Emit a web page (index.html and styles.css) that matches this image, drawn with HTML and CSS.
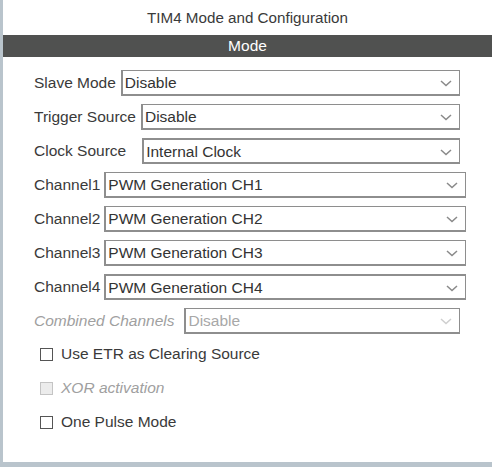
FILE: index.html
```html
<!DOCTYPE html>
<html>
<head>
<meta charset="utf-8">
<link rel="stylesheet" href="styles.css">
</head>
<body>
<div class="page">
  <div class="panel">
    <div class="title">TIM4 Mode and Configuration</div>
    <div class="bar">Mode</div>
    <div class="form">
      <div class="row r-short">
        <span class="label">Slave Mode</span>
        <div class="select"><span>Disable</span><svg class="chev" width="12" height="7" viewBox="0 0 12 7"><path d="M1 1 L6 5.5 L11 1" fill="none" stroke="#8a8a8a" stroke-width="1.5"/></svg></div>
      </div>
      <div class="row r-short">
        <span class="label">Trigger Source</span>
        <div class="select"><span>Disable</span><svg class="chev" width="12" height="7" viewBox="0 0 12 7"><path d="M1 1 L6 5.5 L11 1" fill="none" stroke="#8a8a8a" stroke-width="1.5"/></svg></div>
      </div>
      <div class="row r-short">
        <span class="label label-clock">Clock Source</span>
        <div class="select thick-top"><span>Internal Clock</span><svg class="chev" width="12" height="7" viewBox="0 0 12 7"><path d="M1 1 L6 5.5 L11 1" fill="none" stroke="#8a8a8a" stroke-width="1.5"/></svg></div>
      </div>
      <div class="row r-long">
        <span class="label">Channel1</span>
        <div class="select"><span>PWM Generation CH1</span><svg class="chev" width="12" height="7" viewBox="0 0 12 7"><path d="M1 1 L6 5.5 L11 1" fill="none" stroke="#8a8a8a" stroke-width="1.5"/></svg></div>
      </div>
      <div class="row r-long">
        <span class="label">Channel2</span>
        <div class="select"><span>PWM Generation CH2</span><svg class="chev" width="12" height="7" viewBox="0 0 12 7"><path d="M1 1 L6 5.5 L11 1" fill="none" stroke="#8a8a8a" stroke-width="1.5"/></svg></div>
      </div>
      <div class="row r-long">
        <span class="label">Channel3</span>
        <div class="select"><span>PWM Generation CH3</span><svg class="chev" width="12" height="7" viewBox="0 0 12 7"><path d="M1 1 L6 5.5 L11 1" fill="none" stroke="#8a8a8a" stroke-width="1.5"/></svg></div>
      </div>
      <div class="row r-long">
        <span class="label">Channel4</span>
        <div class="select thick-top"><span>PWM Generation CH4</span><svg class="chev" width="12" height="7" viewBox="0 0 12 7"><path d="M1 1 L6 5.5 L11 1" fill="none" stroke="#8a8a8a" stroke-width="1.5"/></svg></div>
      </div>
      <div class="row r-short disabled">
        <span class="label">Combined Channels</span>
        <div class="select"><span>Disable</span><svg class="chev" width="12" height="7" viewBox="0 0 12 7"><path d="M1 1 L6 5.5 L11 1" fill="none" stroke="#cfcfcf" stroke-width="1.5"/></svg></div>
      </div>
      <div class="checks">
        <div class="check"><span class="box"></span><span>Use ETR as Clearing Source</span></div>
        <div class="check disabled"><span class="box"></span><span class="ctext">XOR activation</span></div>
        <div class="check"><span class="box"></span><span>One Pulse Mode</span></div>
      </div>
    </div>
  </div>
  <div class="bottom"></div>
</div>
</body>
</html>
```
FILE: styles.css
```css
html, body {
  margin: 0;
  padding: 0;
  background: #ffffff;
}
body {
  font-family: "Liberation Sans", Arial, sans-serif;
  font-size: 15.5px;
  color: #333333;
}
.page {
  width: 492px;
  height: 467px;
  display: flex;
  flex-direction: column;
  overflow: hidden;
}
.panel {
  flex: 1;
  border-left: 3px solid #b9c4cc;
  display: flex;
  flex-direction: column;
}
.title {
  height: 35px;
  line-height: 36px;
  text-align: center;
  color: #3a3a3a;
  font-size: 15.2px;
}
.bar {
  height: 22px;
  line-height: 22px;
  background: #505150;
  color: #ffffff;
  text-align: center;
}
.form {
  padding: 13px 0 0 31px;
  display: flex;
  flex-direction: column;
  gap: 8px;
}
.row {
  display: flex;
  align-items: center;
  height: 26px;
}
.r-short { margin-right: 32px; }
.r-long { margin-right: 26px; }
.label {
  white-space: nowrap;
  margin-right: 5px;
  color: #3a3a3a;
}
.r-long .label {
  margin-right: 4px;
}
.label-clock {
  margin-right: 16px;
}
.row.disabled .label {
  margin-right: 10px;
}
.select {
  flex: 1;
  height: 26px;
  box-sizing: border-box;
  border: 1px solid #8e8e8e;
  border-left-width: 2px;
  border-bottom-width: 2px;
  display: flex;
  align-items: center;
  justify-content: space-between;
  padding: 1px 7px 0 2px;
  color: #333333;
  background: #ffffff;
}
.select.thick-top {
  border-top-width: 2px;
}
.chev {
  display: block;
  margin-top: 1px;
}
.row.disabled .label {
  font-style: italic;
  color: #a0a0a0;
}
.row.disabled .select {
  color: #a8a8a8;
  border-color: #8e8e8e;
}
.checks {
  display: flex;
  flex-direction: column;
  gap: 14px;
  padding: 2px 0 0 6px;
}
.check {
  display: flex;
  align-items: center;
  height: 20px;
  gap: 8px;
  color: #3a3a3a;
}
.box {
  width: 13px;
  height: 13px;
  box-sizing: border-box;
  border: 1px solid #555555;
  background: #ffffff;
  display: block;
}
.check.disabled .box {
  border-color: #c4c4c4;
  background: #ececec;
}
.check.disabled .ctext {
  font-style: italic;
  color: #a0a0a0;
}
.bottom {
  height: 5px;
  background: #b9c4cc;
}
```
